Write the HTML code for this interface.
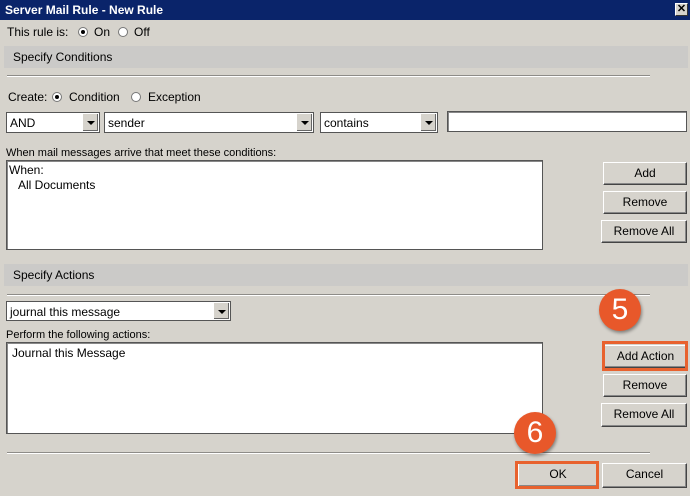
<!DOCTYPE html><html><head><style>
body{margin:0;width:690px;height:496px;background:#d6d3cc;font-family:"Liberation Sans",Arial,sans-serif;font-size:12px;color:#000;position:relative;overflow:hidden}
.a{position:absolute}
.t{position:absolute;white-space:nowrap}
.band{position:absolute;left:4px;right:2px;background:#cbcac8;height:22px}
.hl{position:absolute;height:1px;background:#8e8c88;border-bottom:1px solid #fff}
.in{position:absolute;background:#fff;border:1px solid #555;box-shadow:inset 1px 1px 0 #888;box-sizing:border-box}
.dd{position:absolute;background:#fff;border:1px solid #555;box-sizing:border-box;padding:3px 0 0 3px}
.arr{position:absolute;right:1px;top:1px;bottom:1px;width:15px;background:#d6d3cc;border-left:1px solid #fff;box-shadow:inset -1px -1px 0 #666}
.arr:after{content:"";position:absolute;left:4px;top:7px;border:4px solid transparent;border-top:4px solid #000;border-bottom:0}
.btn{position:absolute;background:#d6d3cc;border:1px solid #fff;border-right-color:#444;border-bottom-color:#444;box-shadow:inset -1px -1px 0 #888;box-sizing:border-box;text-align:center;line-height:20px}
.rad{position:absolute;width:10px;height:10px;border-radius:50%;background:#fff;border:1px solid #777;box-sizing:border-box}
.rad.on:after{content:"";position:absolute;left:2px;top:2px;width:4px;height:4px;border-radius:50%;background:#000}
.circ{position:absolute;width:42px;height:42px;border-radius:50%;background:#e8582a;color:#fff;font-size:30px;text-align:center;line-height:42px;box-shadow:1px 2px 3px rgba(0,0,0,.4)}
.ob{position:absolute;border:3px solid #e8622e;box-sizing:border-box}
</style></head><body>
<div class="a" style="left:0;top:0;width:690px;height:20px;background:#0a246a"></div>
<div class="t" style="left:5px;top:3px;color:#fff;font-weight:bold">Server Mail Rule - New Rule</div>
<div class="a" style="left:675px;top:3px;width:13px;height:13px;background:#d6d3cc;border:1px solid #fff;border-right-color:#333;border-bottom-color:#333;box-sizing:border-box;font-size:11px;font-weight:bold;line-height:11px;text-align:center">✕</div>
<div class="t" style="left:7px;top:25px">This rule is:</div>
<div class="rad on" style="left:78px;top:27px"></div><div class="t" style="left:94px;top:25px">On</div>
<div class="rad" style="left:118px;top:27px"></div><div class="t" style="left:134px;top:25px">Off</div>
<div class="band" style="top:46px"></div><div class="t" style="left:13px;top:50px">Specify Conditions</div>
<div class="hl" style="left:7px;width:643px;top:75px"></div>
<div class="t" style="left:8px;top:90px">Create:</div>
<div class="rad on" style="left:52px;top:92px"></div><div class="t" style="left:69px;top:90px">Condition</div>
<div class="rad" style="left:131px;top:92px"></div><div class="t" style="left:148px;top:90px">Exception</div>
<div class="dd" style="left:6px;top:112px;width:94px;height:21px">AND<div class="arr"></div></div>
<div class="dd" style="left:104px;top:112px;width:210px;height:21px">sender<div class="arr"></div></div>
<div class="dd" style="left:320px;top:112px;width:118px;height:21px">contains<div class="arr"></div></div>
<div class="in" style="left:447px;top:111px;width:240px;height:21px"></div>
<div class="t" style="left:6px;top:147px;font-size:11px">When mail messages arrive that meet these conditions:</div>
<div class="in" style="left:6px;top:160px;width:537px;height:90px"></div>
<div class="t" style="left:9px;top:163px">When:</div><div class="t" style="left:18px;top:178px">All Documents</div>
<div class="btn" style="left:603px;top:162px;width:84px;height:23px">Add</div>
<div class="btn" style="left:603px;top:191px;width:84px;height:23px">Remove</div>
<div class="btn" style="left:601px;top:220px;width:86px;height:23px">Remove All</div>
<div class="band" style="top:264px"></div><div class="t" style="left:13px;top:268px">Specify Actions</div>
<div class="hl" style="left:7px;width:643px;top:294px"></div>
<div class="dd" style="left:6px;top:301px;width:225px;height:20px">journal this message<div class="arr"></div></div>
<div class="t" style="left:6px;top:329px;font-size:11px">Perform the following actions:</div>
<div class="in" style="left:6px;top:342px;width:537px;height:92px"></div>
<div class="t" style="left:12px;top:346px">Journal this Message</div>
<div class="btn" style="left:604px;top:345px;width:83px;height:23px">Add Action</div>
<div class="ob" style="left:602px;top:341px;width:86px;height:30px"></div>
<div class="btn" style="left:603px;top:374px;width:84px;height:23px">Remove</div>
<div class="btn" style="left:601px;top:403px;width:86px;height:24px">Remove All</div>
<div class="hl" style="left:7px;width:643px;top:452px"></div>
<div class="btn" style="left:518px;top:463px;width:80px;height:24px">OK</div>
<div class="ob" style="left:515px;top:461px;width:84px;height:28px"></div>
<div class="btn" style="left:602px;top:463px;width:85px;height:25px">Cancel</div>
<div class="circ" style="left:599px;top:289px">5</div>
<div class="circ" style="left:514px;top:412px">6</div>
</body></html>
